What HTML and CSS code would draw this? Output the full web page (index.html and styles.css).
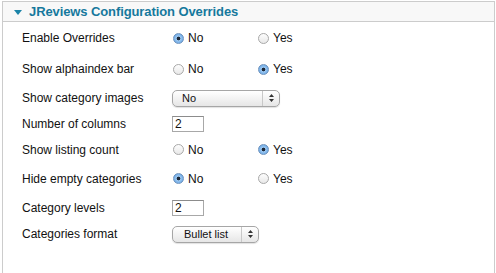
FILE: index.html
```html
<!DOCTYPE html>
<html lang="en">
<head>
    <meta charset="UTF-8">
    <title>JReviews Configuration Overrides</title>
    <link rel="stylesheet" href="styles.css">
</head>
<body>
    <div class="panel">
        <div class="panel-header">
            <span class="toggle"></span>
            <h3>JReviews Configuration Overrides</h3>
        </div>
        <div class="panel-body">
            <div class="row r1">
                <label class="field-label">Enable Overrides</label>
                <div class="options">
                    <label class="opt"><input type="radio" name="overrides" checked> No</label>
                    <label class="opt"><input type="radio" name="overrides"> Yes</label>
                </div>
            </div>
            <div class="row r2">
                <label class="field-label">Show alphaindex bar</label>
                <div class="options">
                    <label class="opt"><input type="radio" name="alpha"> No</label>
                    <label class="opt"><input type="radio" name="alpha" checked> Yes</label>
                </div>
            </div>
            <div class="row r3">
                <label class="field-label">Show category images</label>
                <div class="select wide">
                    <select><option>No</option><option>Yes</option></select>
                    <svg class="arrows" width="5" height="8" viewBox="0 0 5 8"><path d="M2.5 0 L5 3 H0 Z M2.5 8 L5 5 H0 Z" fill="#333"/></svg>
                </div>
            </div>
            <div class="row r4">
                <label class="field-label">Number of columns</label>
                <input class="num" type="text" value="2">
            </div>
            <div class="row r5">
                <label class="field-label">Show listing count</label>
                <div class="options">
                    <label class="opt"><input type="radio" name="count"> No</label>
                    <label class="opt"><input type="radio" name="count" checked> Yes</label>
                </div>
            </div>
            <div class="row r6">
                <label class="field-label">Hide empty categories</label>
                <div class="options">
                    <label class="opt"><input type="radio" name="empty" checked> No</label>
                    <label class="opt"><input type="radio" name="empty"> Yes</label>
                </div>
            </div>
            <div class="row r7">
                <label class="field-label">Category levels</label>
                <input class="num" type="text" value="2">
            </div>
            <div class="row r8">
                <label class="field-label">Categories format</label>
                <div class="select narrow">
                    <select><option>Bullet list</option><option>Comma separated</option></select>
                    <svg class="arrows" width="5" height="8" viewBox="0 0 5 8"><path d="M2.5 0 L5 3 H0 Z M2.5 8 L5 5 H0 Z" fill="#333"/></svg>
                </div>
            </div>
        </div>
    </div>
</body>
</html>
```

FILE: styles.css
```css
* {
    margin: 0;
    padding: 0;
    box-sizing: border-box;
}

body {
    font-family: 'Liberation Sans', Arial, sans-serif;
    font-size: 12px;
    color: #111;
    background: #fff;
    padding: 1px 1px 0 2px;
}

.panel {
    border: 1px solid #ccc;
    border-bottom: none;
    height: 272px;
}

.panel-header {
    display: flex;
    align-items: center;
    height: 20px;
    background: #f8f8f8;
    border-bottom: 1px solid #ccc;
    padding-left: 11px;
}

.toggle {
    width: 0;
    height: 0;
    border-left: 4px solid transparent;
    border-right: 4px solid transparent;
    border-top: 5px solid #1b84a8;
    margin-right: 7px;
    margin-top: 1px;
}

.panel-header h3 {
    font-size: 13px;
    font-weight: bold;
    color: #16789d;
    letter-spacing: -0.1px;
}

.panel-body {
    padding-left: 19px;
}

.row {
    display: flex;
    align-items: center;
}

.r1 { height: 32px; }
.r2 { height: 30px; }
.r3 { height: 28px; }
.r4 { height: 24px; }
.r5 { height: 27px; }
.r6 { height: 31px; }
.r7 { height: 27px; }
.r8 { height: 26px; }

.field-label {
    width: 150px;
    color: #111;
}

.options {
    display: flex;
}

.opt {
    width: 85px;
    display: flex;
    align-items: center;
}

.opt input {
    appearance: none;
    -webkit-appearance: none;
    width: 11px;
    height: 11px;
    border-radius: 50%;
    border: 1px solid #a8a8a8;
    background: linear-gradient(#fdfdfd, #e8e8e8);
    margin: 0 4px 0 1px;
}

.opt input:checked {
    border-color: #6f93bd;
    background: radial-gradient(circle, #1c2635 0, #1c2635 1.5px, #9cc7f0 2.2px, #6aa8e6 5px);
}

.select {
    position: relative;
    display: flex;
}

.select select {
    appearance: none;
    -webkit-appearance: none;
    height: 17px;
    border: 1px solid #a6a6a6;
    border-radius: 5px;
    background: linear-gradient(#ffffff, #e6e6e6);
    font-family: 'Liberation Sans', Arial, sans-serif;
    font-size: 11px;
    color: #111;
    padding: 0 0 0 9px;
    box-shadow: 0 1px 1px rgba(0, 0, 0, 0.12);
}

.select.wide select {
    width: 108px;
}

.select.narrow select {
    width: 87px;
    padding-left: 11px;
}

.select::after {
    content: '';
    position: absolute;
    top: 1px;
    bottom: 1px;
    right: 17px;
    width: 1px;
    background: #c8c8c8;
}

.arrows {
    position: absolute;
    right: 6px;
    top: 4px;
}

.num {
    width: 32px;
    height: 16px;
    border: 1px solid #a8a8a8;
    border-top-color: #8c8c8c;
    font-family: 'Liberation Sans', Arial, sans-serif;
    font-size: 12px;
    padding: 0 2px;
    color: #111;
}
```
